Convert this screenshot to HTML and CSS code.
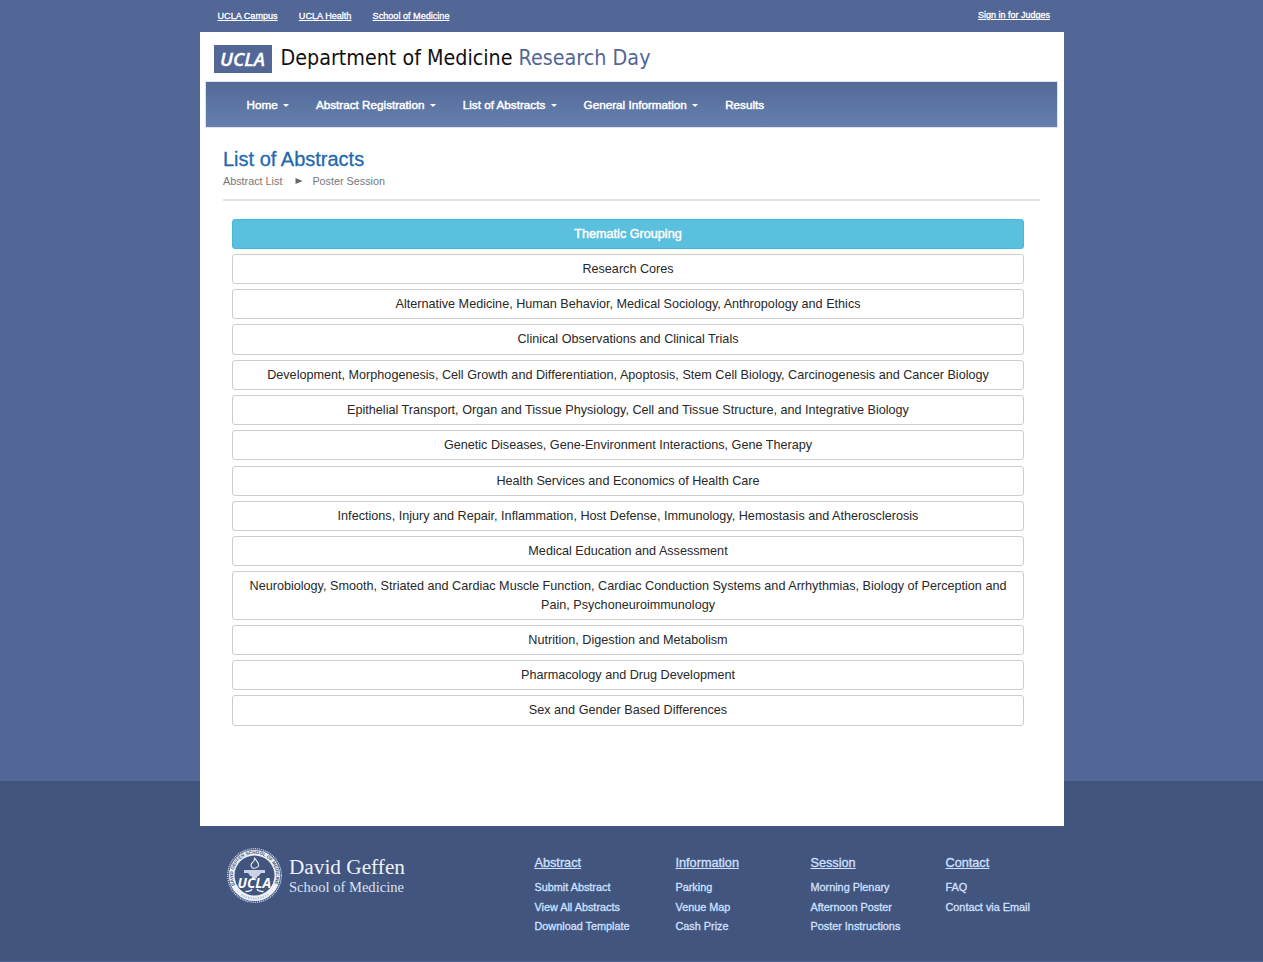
FILE: index.html
```html
<!DOCTYPE html>
<html lang="en">
<head>
<meta charset="utf-8">
<title>List of Abstracts</title>
<link rel="stylesheet" href="styles.css">
</head>
<body>
<div class="page">
  <div class="topbar">
    <nav class="toplinks"><a>UCLA Campus</a><a>UCLA Health</a><a>School of Medicine</a></nav>
    <a class="signin">Sign in for Judges</a>
  </div>
  <main class="sheet">
    <svg class="brand" width="450" height="28" viewBox="0 0 450 28">
      <rect width="58" height="28" fill="#536796"/>
      <text class="brand-box" x="6" y="20.5" textLength="45" lengthAdjust="spacingAndGlyphs">UCLA</text>
      <text class="brand-name" x="66.500" y="20.3" textLength="232" lengthAdjust="spacingAndGlyphs">Department of Medicine</text>
      <text class="brand-name brand-day" x="304.500" y="20.3" textLength="132" lengthAdjust="spacingAndGlyphs">Research Day</text>
    </svg>
    <nav class="menu">
      <a>Home<i class="caret"></i></a>
      <a>Abstract Registration<i class="caret"></i></a>
      <a>List of Abstracts<i class="caret"></i></a>
      <a>General Information<i class="caret"></i></a>
      <a>Results</a>
    </nav>
    <header class="heading">
      <h1>List of Abstracts</h1>
      <div class="crumbs"><span>Abstract List</span><svg class="arrow" width="8" height="6" viewBox="0 0 8 6"><path d="M0.5 0L7.5 3L0.5 6Z" fill="#666"/></svg><span>Poster Session</span></div>
    </header>
    <div class="groups">
      <a class="group active">Thematic Grouping</a>
      <a class="group">Research Cores</a>
      <a class="group">Alternative Medicine, Human Behavior, Medical Sociology, Anthropology and Ethics</a>
      <a class="group">Clinical Observations and Clinical Trials</a>
      <a class="group">Development, Morphogenesis, Cell Growth and Differentiation, Apoptosis, Stem Cell Biology, Carcinogenesis and Cancer Biology</a>
      <a class="group">Epithelial Transport, Organ and Tissue Physiology, Cell and Tissue Structure, and Integrative Biology</a>
      <a class="group">Genetic Diseases, Gene-Environment Interactions, Gene Therapy</a>
      <a class="group">Health Services and Economics of Health Care</a>
      <a class="group">Infections, Injury and Repair, Inflammation, Host Defense, Immunology, Hemostasis and Atherosclerosis</a>
      <a class="group">Medical Education and Assessment</a>
      <a class="group">Neurobiology, Smooth, Striated and Cardiac Muscle Function, Cardiac Conduction Systems and Arrhythmias, Biology of Perception and Pain, Psychoneuroimmunology</a>
      <a class="group">Nutrition, Digestion and Metabolism</a>
      <a class="group">Pharmacology and Drug Development</a>
      <a class="group">Sex and Gender Based Differences</a>
    </div>
  </main>
  <footer class="footer">
    <svg class="school" width="180" height="56" viewBox="0 0 180 56">
      <defs><path id="ring" d="M8.1 37A21.600 21.600 0 1 1 46.900 37"/></defs>
      <circle cx="27.5" cy="27.5" r="26.8" fill="none" stroke="#cbd3e2" stroke-width="1.2" stroke-dasharray="1.2 0.8"/>
      <circle cx="27.5" cy="27.5" r="25.6" fill="#eef1f6"/>
      <circle cx="27.5" cy="27.5" r="20" fill="#41557f"/>
      <text class="seal-ring"><textPath href="#ring" textLength="86" lengthAdjust="spacingAndGlyphs">DAVID GEFFEN SCHOOL OF MEDICINE</textPath></text>
      <path d="M14 46.500Q27.500 54.500 41 46.500" fill="none" stroke="#b9c3d8" stroke-width="2" stroke-dasharray="1.5 1"/>
      <path d="M27.500 9.500C28 12 32.500 14.500 31.500 18Q29.500 21 25.500 20Q22.500 17 25.500 14.500Q28 13 27.500 9.500Z" fill="none" stroke="#eef1f6" stroke-width="1.100"/>
      <path d="M17 22H38V25H34Q32 28.500 30 28.500V30H25V28.500Q23 28.500 21 25H17Z" fill="#cbd3e2"/>
      <path d="M25 41Q24 43.500 18.500 43.500M30 41Q31 43.500 36.500 43.500" fill="none" stroke="#eef1f6" stroke-width="1.400"/>
      <text class="seal-name" x="10.500" y="39.500" textLength="33.500" lengthAdjust="spacingAndGlyphs">UCLA</text>
      <text class="school-name" x="62" y="26" textLength="116" lengthAdjust="spacingAndGlyphs">David Geffen</text>
      <text class="school-sub" x="62" y="43.500" textLength="115" lengthAdjust="spacingAndGlyphs">School of Medicine</text>
    </svg>
    <div class="columns">
      <section><h2>Abstract</h2><a>Submit Abstract</a><a>View All Abstracts</a><a>Download Template</a></section>
      <section><h2>Information</h2><a>Parking</a><a>Venue Map</a><a>Cash Prize</a></section>
      <section><h2>Session</h2><a>Morning Plenary</a><a>Afternoon Poster</a><a>Poster Instructions</a></section>
      <section><h2>Contact</h2><a>FAQ</a><a>Contact via Email</a></section>
    </div>
  </footer>
</div>
</body>
</html>
```
FILE: styles.css
```css
* { box-sizing: border-box; }
body {
  margin: 0;
  height: 962px;
  overflow: hidden;
  font-family: "Liberation Sans", Arial, sans-serif;
  background: linear-gradient(#536796 781px, #41557f 781px, #41557f 961px, #4e638f 961px);
}
.page { width: 864px; margin-left: 200px; }
.topbar {
  height: 32px;
  padding: 10px 14px 0 17.5px;
  display: flex;
  justify-content: space-between;
  font-size: 9px;
  line-height: 12px;
  color: #fff;
  -webkit-text-stroke: 0.3px #fff;
}
.toplinks { display: flex; gap: 21.2px; font-size: 9.1px; }
.toplinks a, .signin { text-decoration: underline; }
.signin { margin-top: -1px; }
.sheet { height: 794px; background: #fff; padding: 13px 6px 0 5px; }
.brand { display: block; margin-left: 9px; }
.brand-box { font: italic 600 18.5px "Open Sans", sans-serif; fill: #fff; stroke: #fff; stroke-width: 0.3px; }
.brand-name { font: 20.6px "DejaVu Sans", sans-serif; fill: #111; }
.brand-name.brand-day { fill: #536796; }
.menu {
  margin-top: 8px;
  height: 47px;
  border: 1px solid #dfe3ea;
  background: linear-gradient(#536a97, #667fae);
  display: flex;
  align-items: center;
  gap: 27px;
  padding-left: 40.5px;
  font-size: 11.7px;
  color: #fff;
  -webkit-text-stroke: 0.45px #fff;
}
.menu a { white-space: nowrap; }
.caret {
  display: inline-block;
  margin-left: 5.3px;
  vertical-align: 2px;
  border: 3px solid transparent;
  border-top-color: #fff;
  border-bottom: 0;
}
.heading { margin: 18px 18px 0; height: 55px; border-bottom: 2px solid #e1e1e1; }
h1 { margin: 0; font-size: 20px; line-height: 26px; font-weight: 400; color: #1f69ad; -webkit-text-stroke: 0.3px #1f69ad; }
.crumbs { display: flex; align-items: center; font-size: 10.8px; line-height: 18px; color: #777; }
.arrow { margin: 0 9px 0 13px; }
.groups { margin: 17.65px 34px 0 27px; }
.group {
  display: block;
  margin-bottom: 5.07px;
  padding: 5px 12px;
  border: 1px solid #ccc;
  border-radius: 3px;
  font-size: 12.64px;
  line-height: 18.2px;
  text-align: center;
  color: #282828;
}
.group.active { background: #5bc0de; border-color: #46b8da; color: #fff; -webkit-text-stroke: 0.45px #fff; }
.footer { display: flex; padding: 22px 0 0 27px; }
.school { flex: none; }
.seal-ring { font: 700 4.6px "Liberation Sans", sans-serif; fill: #41557f; }
.seal-name { font: italic 700 13.5px "Open Sans", sans-serif; fill: #fff; }
.school-name { font: 20px "Liberation Serif", serif; fill: #eef1f6; }
.school-sub { font: 14px "Liberation Serif", serif; fill: #dce2ed; }
.columns {
  display: grid;
  grid-template-columns: 141px 135px 135px 110px;
  margin: 5px 0 0 127.5px;
  color: #d0e0ff;
  -webkit-text-stroke: 0.3px #d0e0ff;
}
h2 { margin: 0 0 5px; font-size: 12.7px; line-height: 20px; font-weight: 400; text-decoration: underline; }
.columns a { display: block; font-size: 10.85px; line-height: 19.5px; }
```
